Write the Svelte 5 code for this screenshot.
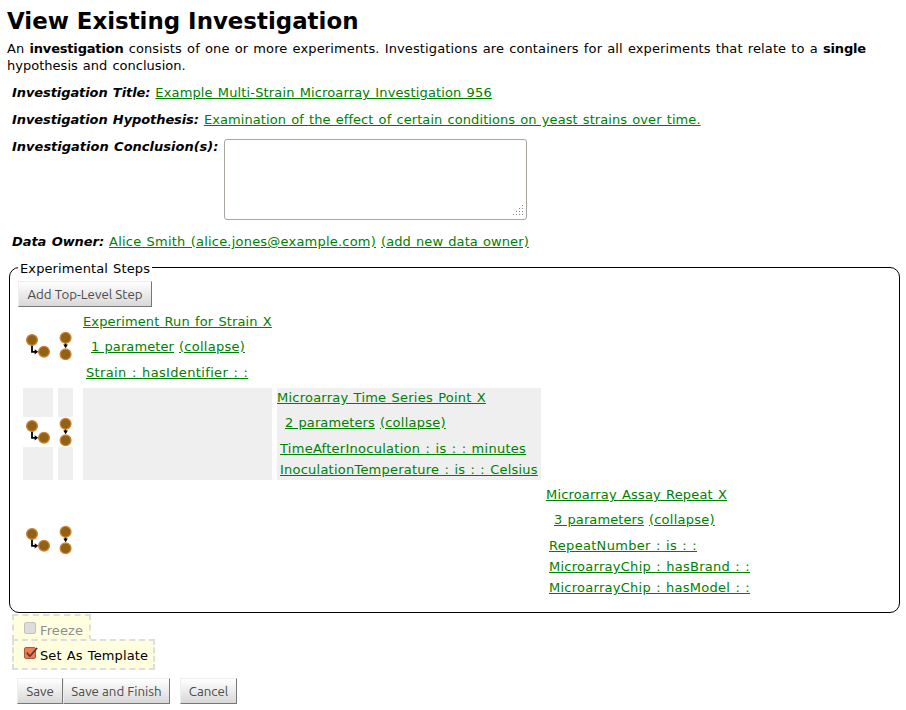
<script>
  // ls is the letter spacing of each link, in pixels
  const steps = [
    { level: 0, title: 'Experiment Run for Strain X', ls: 0.13, count: '1 parameter', params: [['Strain : hasIdentifier : :', 0.35]] },
    { level: 1, title: 'Microarray Time Series Point X', ls: 0.23, count: '2 parameters', params: [['TimeAfterInoculation : is : : minutes', 0.27], ['InoculationTemperature : is : : Celsius', 0.23]] },
    { level: 2, title: 'Microarray Assay Repeat X', ls: 0.17, count: '3 parameters', params: [['RepeatNumber : is : :', 0.31], ['MicroarrayChip : hasBrand : :', 0.27], ['MicroarrayChip : hasModel : :', 0.26]] }
  ];
</script>

{#snippet link(text, ls)}<span class="link" style:letter-spacing="{ls}px">{text}</span>{/snippet}

<main>
  <h1>View Existing Investigation</h1>
  <p>An <b>investigation</b> consists of one or more experiments. Investigations are containers for all experiments that relate to a <b>single</b><br /><span class="last">hypothesis and conclusion.</span></p>
  <div class="field"><em>Investigation Title:</em>{@render link('Example Multi-Strain Microarray Investigation 956', 0.14)}</div>
  <div class="field"><em>Investigation Hypothesis:</em>{@render link('Examination of the effect of certain conditions on yeast strains over time.', 0.085)}</div>
  <div class="field conclusion"><em>Investigation Conclusion(s):</em>
    <div class="area">
      <svg width="12" height="12" viewBox="0 0 12 12" fill="#888">
        {#each [[9, 0], [6, 3], [9, 3], [3, 6], [6, 6], [9, 6], [0, 9], [3, 9], [6, 9], [9, 9]] as [x, y]}
          <rect {x} {y} width="1" height="1" />
        {/each}
      </svg>
    </div>
  </div>
  <div class="field owner"><em>Data Owner:</em>{@render link('Alice Smith (alice.jones@example.com)', 0.21)}{@render link('(add new data owner)', 0.095)}</div>

  <section class="steps">
    <span class="legend">Experimental Steps</span>
    <button class="add">Add Top-Level Step</button>
    <div class="rows">
      {#each steps as step}
        <div class="row" class:shaded={step.level === 1}>
          <div class="cell icon">
            <svg width="30" height="30" viewBox="0 0 30 30">
              <path d="M9 14v6.8h4" fill="none" stroke="#000" stroke-width="1.8" />
              <path d="M11.7 18.2l3.5 2.6-3.5 2.6z" />
              <circle cx="9" cy="9" r="5.4" /><circle cx="21" cy="20.7" r="5.4" />
            </svg>
          </div>
          <div class="cell icon">
            <svg width="15" height="30" viewBox="0 0 15 30">
              <path d="M7.5 11v4" stroke="#000" stroke-width="1.6" />
              <path d="M5.3 13.6h4.6l-2.3 3.6z" />
              <circle cx="7.6" cy="6.8" r="5.4" /><circle cx="7.6" cy="23.3" r="5.4" />
            </svg>
          </div>
          {#each Array(step.level) as _}<div class="cell"></div>{/each}
          <div class="cell body">
            <div class="title">{@render link(step.title, step.ls)}</div>
            <div class="count">{@render link(step.count, 0.1)}{@render link('(collapse)', 0.25)}</div>
            {#each step.params as [text, ls]}<div class="param">{@render link(text, ls)}</div>{/each}
          </div>
        </div>
      {/each}
    </div>
  </section>

  <div class="option freeze"><span class="box"></span><span>Freeze</span></div>
  <div class="option template">
    <span class="box checked"><svg width="15" height="14" viewBox="0 0 15 14"><path d="M2.8 5.6l3 3.6L13.2 1" fill="none" stroke="#573a32" stroke-width="1.7" /></svg></span><span>Set As Template</span>
  </div>
  <div class="actions">
    <button style:width="46px">Save</button><button style:width="107px">Save and Finish</button><button class="cancel" style:width="57px">Cancel</button>
  </div>
</main>

<style>
  :global(body) { background: #fff; overflow: hidden; }
  main { box-sizing: border-box; width: 906px; height: 710px; padding: 7px 6px 0 7px; font: 13px/17px "DejaVu Sans", sans-serif; color: #000; white-space: nowrap; word-spacing: 0.87px; }
  h1 { margin: 0 0 5px; font-size: 22.9px; line-height: 28px; font-weight: bold; word-spacing: 0; }
  p { margin: 0 0 10px; letter-spacing: 0.12px; }
  p b { letter-spacing: -0.18px; }
  .last { letter-spacing: 0.02px; }
  .field { display: flex; gap: 5px; height: 17px; margin: 0 0 10px 5px; }
  .field em { font-weight: bold; letter-spacing: -0.09px; }
  .link { color: #008000; text-decoration: underline; }
  .conclusion { height: 85px; gap: 0; }
  .conclusion em { width: 212px; letter-spacing: 0; }
  .area { box-sizing: border-box; width: 303px; height: 81px; margin-top: 1px; border: 1px solid #aaa59f; border-radius: 3px; display: flex; justify-content: flex-end; align-items: flex-end; padding: 0 1px 2px 0; }
  .owner { margin-bottom: 17px; }
  .owner em { letter-spacing: -0.06px; }
  .steps { position: relative; box-sizing: border-box; width: 891px; height: 346px; margin-left: 2px; border: 1px solid #000; border-radius: 10px; padding: 13px 8px 0; }
  .legend { position: absolute; left: 8px; top: -8px; padding: 0 2px; background: #fff; letter-spacing: 0.11px; }
  button { box-sizing: border-box; height: 26px; margin: 0; padding: 0; font: 13.3px/23px Ubuntu, "Noto Sans", sans-serif; letter-spacing: 0; word-spacing: 0; color: #4c4c4c; background: linear-gradient(#fff, #d8d8d8); border: 1px solid; border-color: #eee #777 #777 #eee; }
  .add { display: block; width: 134px; }
  .rows { display: flex; flex-direction: column; gap: 5px; margin: 5px 0 0 5px; }
  .row { display: grid; grid-template-columns: 30px 20px 189px 264px 220px; column-gap: 5px; height: 71px; }
  .row:nth-child(2) { height: 92px; }
  .row:nth-child(3) { height: 113px; }
  .cell:nth-child(2) { width: 15px; }
  .shaded .cell { background: #efefef; }
  .icon { display: flex; align-items: center; padding-bottom: 3px; }
  .shaded .icon { padding-bottom: 4px; height: 88px; }
  .icon svg { display: block; background: #fff; }
  .icon circle { fill: #8f6216; stroke: #d28236; stroke-width: 1.3; }
  .title { height: 17px; padding-top: 1px; }
  .count { display: flex; gap: 5px; padding: 8px 0 0 8px; height: 17px; }
  .param { padding: 4px 0 0 3px; height: 17px; }
  .count + .param { padding-top: 9px; }
  .option { box-sizing: border-box; display: flex; margin-left: 5px; border: 2px dashed #ddd; background: #ffffe0; letter-spacing: 0.12px; }
  .option > span:last-child { line-height: 17px; padding-top: 6px; }
  .freeze { width: 79px; height: 27px; margin-top: 1px; border-bottom: 0; color: #8f8f8c; padding-left: 10px; }
  .template { width: 143px; height: 31px; margin-top: -2px; padding-left: 10px; }
  .box { box-sizing: border-box; width: 12px; height: 12px; margin: 6px 4px 0 0; border: 1px solid #c3c1bf; border-radius: 2px; background: #dedddb; }
  .checked { border-color: #a95b41; background: #f27b53; }
  .checked svg { display: block; margin: -1px; overflow: visible; }
  .actions { display: flex; margin: 8px 0 0 10px; }
  .cancel { margin-left: 10px; }
</style>
